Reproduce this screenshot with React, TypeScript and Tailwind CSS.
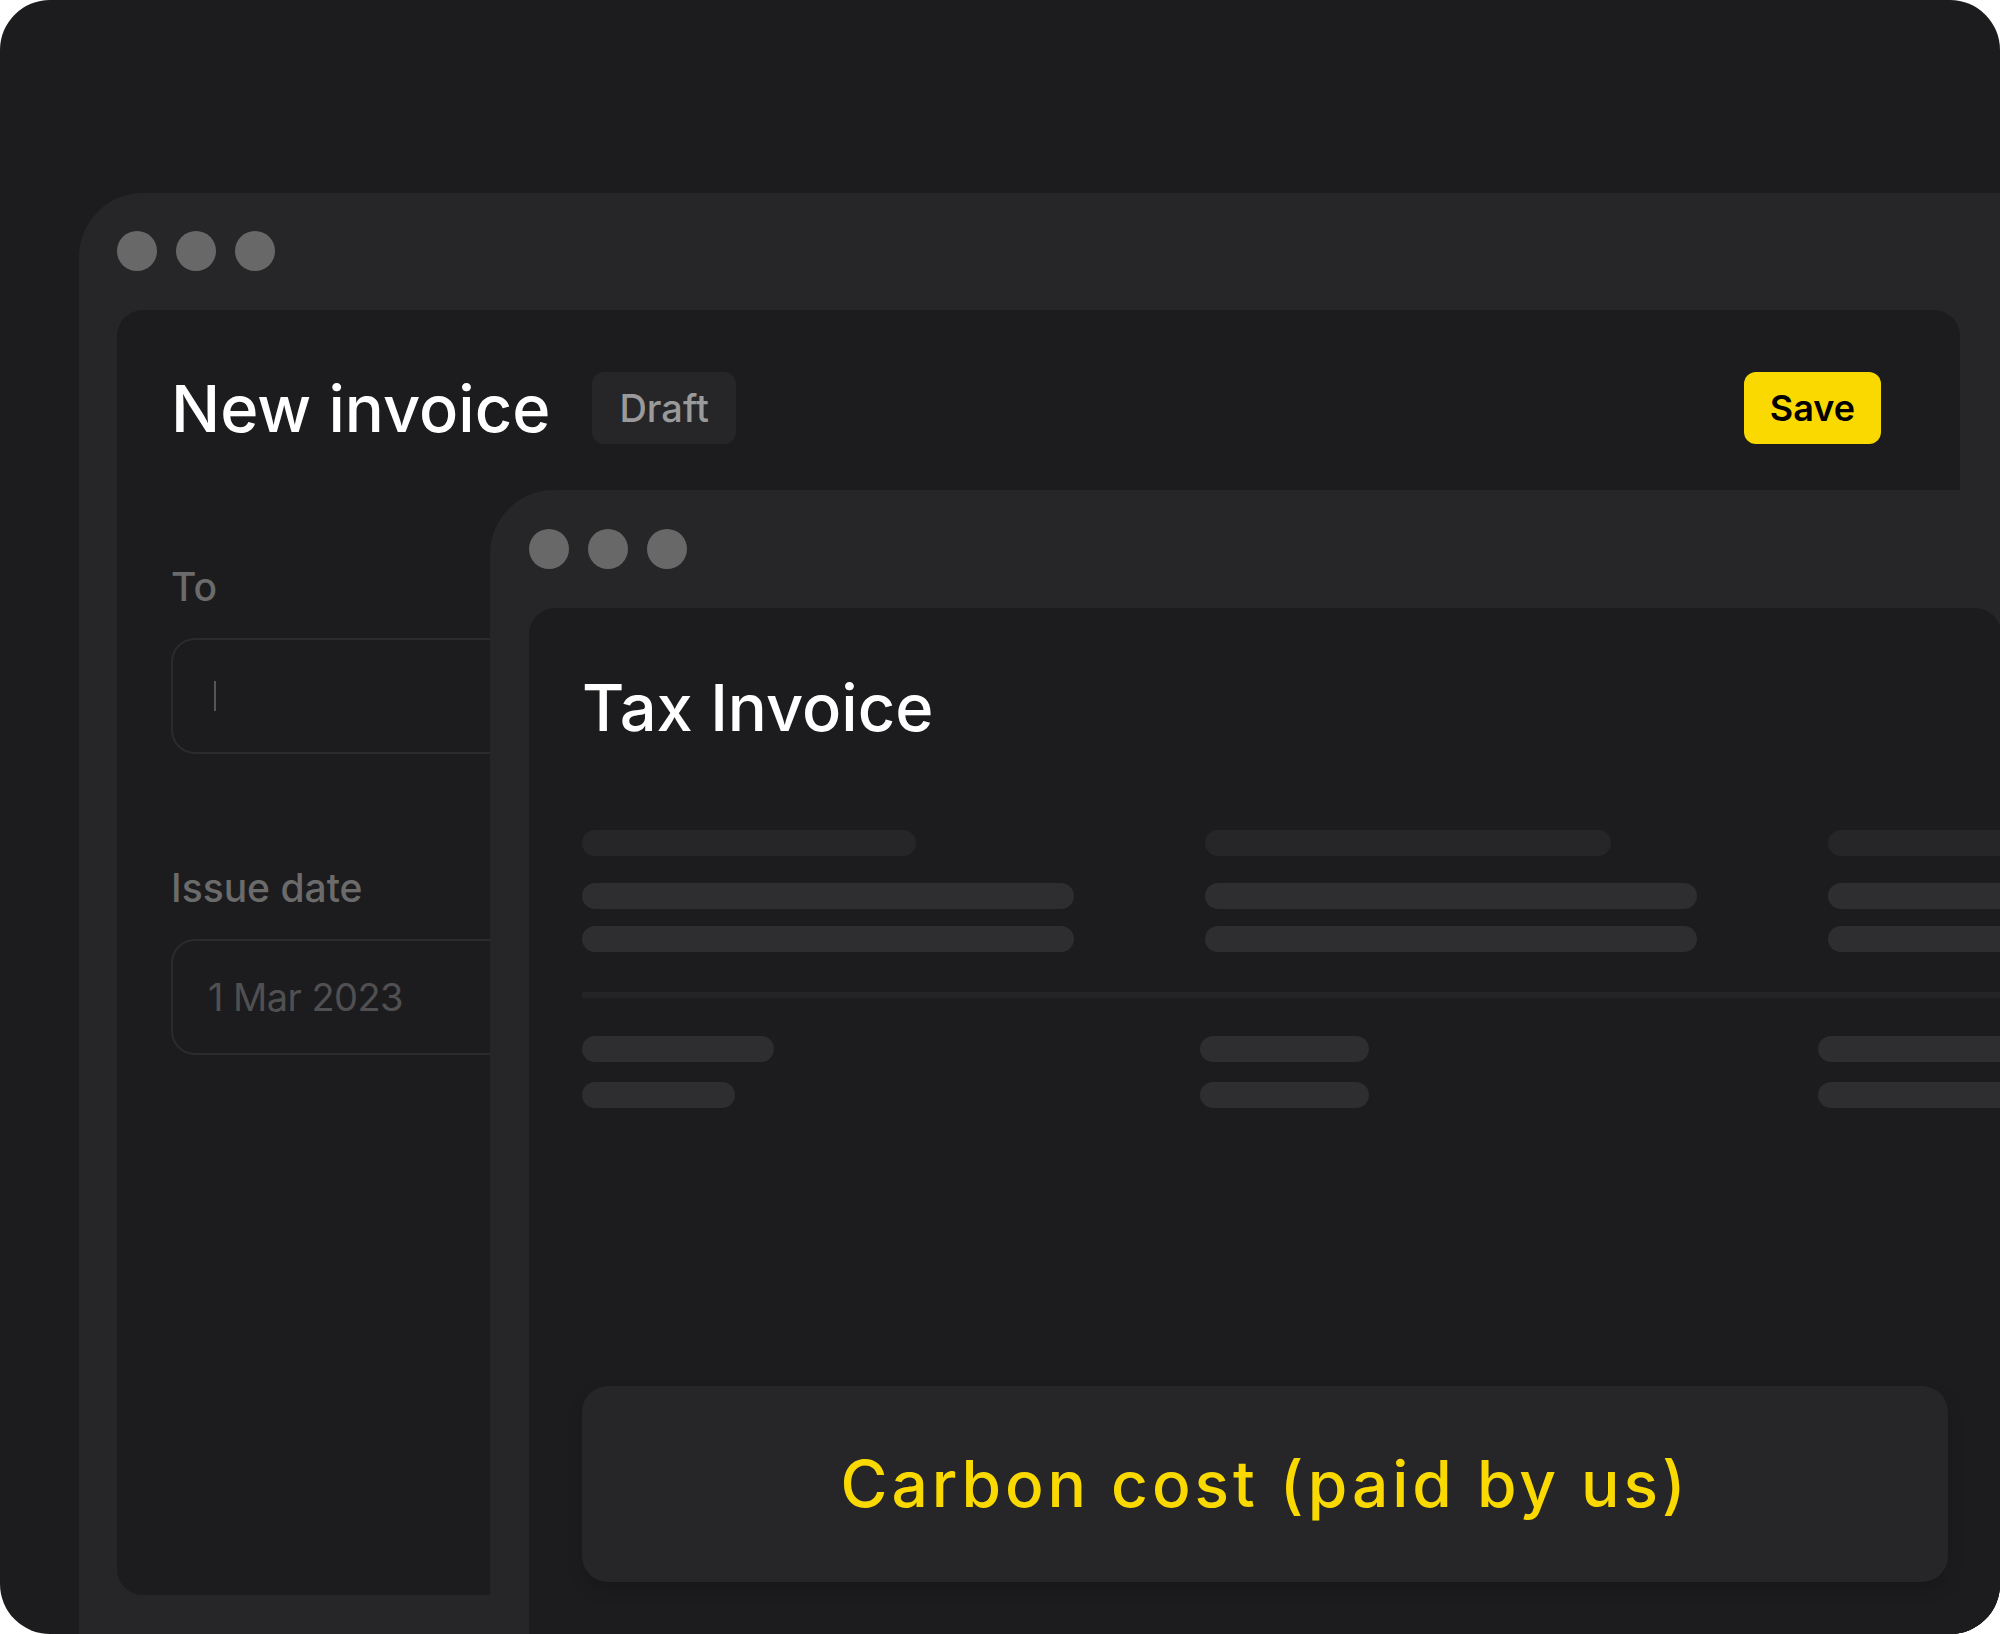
import React from "react";

const font = "font-['Inter','Noto_Sans',sans-serif]";

function Dots() {
    return (
        <div className="flex gap-[19px]">
            <div className="w-[40px] h-[40px] rounded-full bg-[#686868]"/>
            <div className="w-[40px] h-[40px] rounded-full bg-[#686868]"/>
            <div className="w-[40px] h-[40px] rounded-full bg-[#686868]"/>
        </div>
    );
}

function Bar({w, light = true}: { w: number; light?: boolean }) {
    return (
        <div className={light ? "h-[26px] rounded-full bg-[#2e2e30]" : "h-[26px] rounded-full bg-[#262628]"}
             style={{width: w}}/>
    );
}

export default function App() {
    return (
        <div className={`relative w-[2000px] h-[1634px] overflow-hidden rounded-[50px] bg-[#1c1c1e] pl-[79px] pt-[193px] ${font}`}>
            {/* back window: the invoice form */}
            <div className="w-[1960px] h-[1500px] rounded-tl-[64px] bg-[#262628] pl-[38px] pt-[38px]">
                <Dots/>
                <div className="mt-[39px] w-[1843px] h-[1285px] rounded-[26px] bg-[#1c1c1e] pl-[54px] pr-[79px] pt-[62px]">
                    <div className="flex items-center justify-between h-[72px]">
                        <div className="flex items-center gap-[42px]">
                            <h1 className="text-[65px] leading-none font-medium text-white">New invoice</h1>
                            <span className="flex items-center h-[72px] px-[27px] rounded-[12px] bg-[#262628] text-[38px] font-medium text-[#9a9a9a]">Draft</span>
                        </div>
                        <button className="h-[72px] px-[26px] rounded-[12px] bg-[#fad900] text-[36px] font-semibold text-black">Save</button>
                    </div>
                    <div className="mt-[123px] text-[39px] leading-none font-medium text-[#6b6b6b]">To</div>
                    <div className="mt-[32px] w-[760px] h-[116px] rounded-[24px] border-2 border-[#2b2b2d] flex items-center pl-[41px]">
                        <div className="w-[2px] h-[30px] bg-[#555555]"/>
                    </div>
                    <div className="mt-[114px] text-[39px] leading-none font-medium text-[#6b6b6b]">Issue date</div>
                    <div className="mt-[32px] w-[760px] h-[116px] rounded-[24px] border-2 border-[#2b2b2d] flex items-center pl-[35px] text-[38px] tracking-[-0.015em] text-[#505052]">
                        1 Mar 2023
                    </div>
                </div>
            </div>

            {/* front window: the generated tax invoice */}
            <div className="absolute left-[490px] top-[490px] w-[1550px] h-[1250px] rounded-tl-[64px] bg-[#262628] pl-[39px] pt-[39px]">
                <Dots/>
                <div className="mt-[39px] w-[1472px] h-[1150px] rounded-[26px] bg-[#1c1c1e] pl-[53px] pt-[67px] overflow-hidden">
                    <h2 className="text-[65px] leading-none font-medium text-white">Tax Invoice</h2>
                    <div className="mt-[90px] flex gap-[131px]">
                        {[334, 406, 406].map((w, i) => (
                            <div key={i} className="flex-none w-[492px] flex flex-col">
                                <Bar w={w} light={false}/>
                                <div className="mt-[27px]"><Bar w={492}/></div>
                                <div className="mt-[17px]"><Bar w={492}/></div>
                            </div>
                        ))}
                    </div>
                    <div className="mt-[40px] h-[6px] w-[1500px] bg-[#242426]"/>
                    <div className="mt-[38px] flex gap-[126px]">
                        {[[192, 153], [169, 169], [300, 300]].map(([a, b], i) => (
                            <div key={i} className="flex-none w-[492px] flex flex-col gap-[20px]">
                                <Bar w={a}/>
                                <Bar w={b}/>
                            </div>
                        ))}
                    </div>
                    <div className="mt-[278px] w-[1366px] h-[196px] rounded-[26px] bg-[#262628] shadow-[0_8px_16px_rgba(0,0,0,0.15)] flex items-center justify-center">
                        <span className="text-[64px] font-medium text-[#f9d900] tracking-[0.062em]">Carbon cost (paid by us)</span>
                    </div>
                </div>
            </div>
        </div>
    );
}
